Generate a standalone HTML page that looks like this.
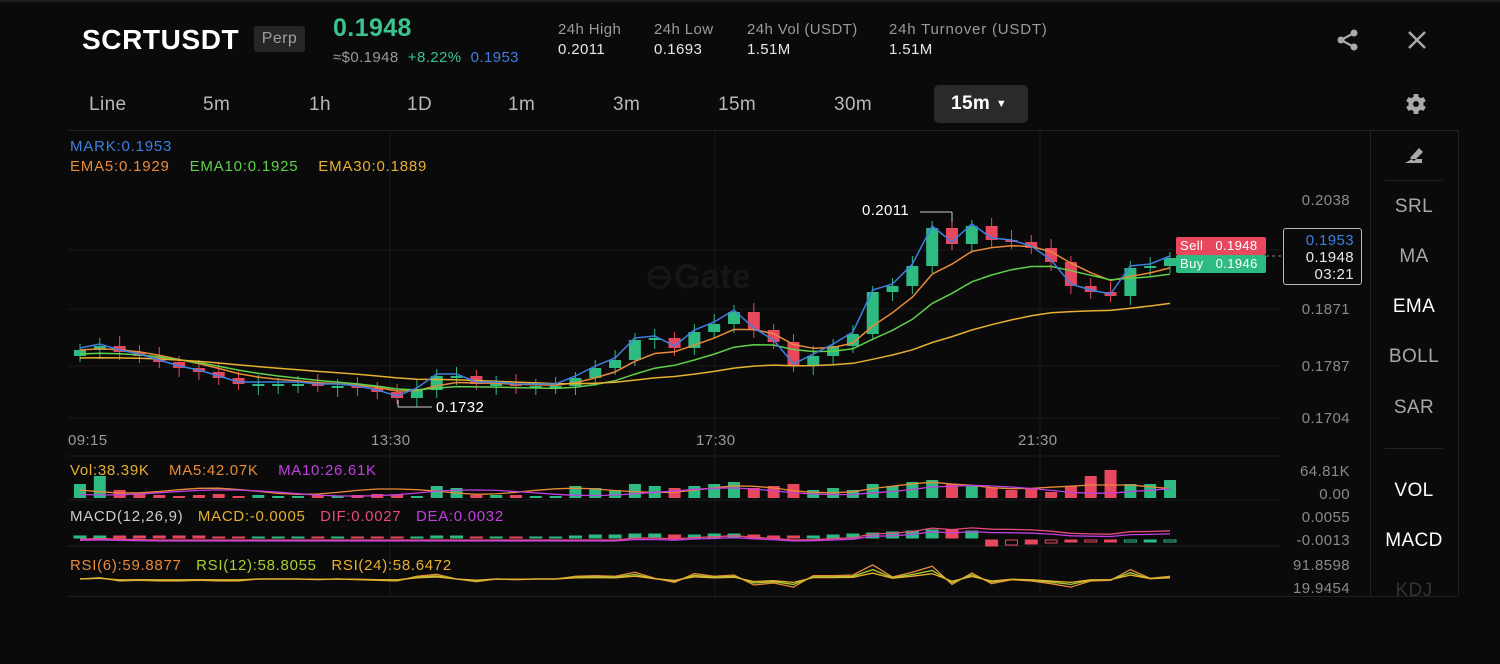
<!DOCTYPE html>
<html><head><meta charset="utf-8"><style>
*{margin:0;padding:0;box-sizing:border-box}
body{width:1500px;height:664px;background:#0a0a0b;font-family:"Liberation Sans",sans-serif;color:#e8e8e8;position:relative;overflow:hidden;letter-spacing:0.4px}
.a{position:absolute;white-space:nowrap}
.g{color:#9a9a9a}
.tf{position:absolute;top:94px;font-size:19px;color:#b8b8b8}
.ax{position:absolute;font-size:15px;color:#8a8a8a;right:150px}
.side{position:absolute;left:1385px;width:58px;text-align:center;font-size:19px;color:#a8a8a8}
</style></head><body>
<div class="a" style="left:0;top:0;width:1500px;height:2px;background:#1c1c1c"></div>
<div class="a" style="left:82px;top:24px;font-size:28px;font-weight:bold;color:#fff;letter-spacing:0.6px">SCRTUSDT</div>
<div class="a" style="left:254px;top:26px;width:51px;height:26px;background:#262628;border-radius:3px;color:#a0a0a0;font-size:16px;text-align:center;line-height:26px">Perp</div>
<div class="a" style="left:333px;top:14px;font-size:25px;font-weight:bold;color:#3bc48d">0.1948</div>
<div class="a" style="left:333px;top:49px;font-size:15px"><span class="g">≈$0.1948</span> <span style="color:#3bc48d">&nbsp;+8.22%</span> <span style="color:#3d7fe0">&nbsp;0.1953</span></div>
<div class="a g" style="left:558px;top:21px;font-size:15px">24h High</div><div class="a" style="left:558px;top:41px;font-size:15px">0.2011</div>
<div class="a g" style="left:654px;top:21px;font-size:15px">24h Low</div><div class="a" style="left:654px;top:41px;font-size:15px">0.1693</div>
<div class="a g" style="left:747px;top:21px;font-size:15px">24h Vol (USDT)</div><div class="a" style="left:747px;top:41px;font-size:15px">1.51M</div>
<div class="a g" style="left:889px;top:21px;font-size:15px;letter-spacing:0.8px">24h Turnover (USDT)</div><div class="a" style="left:889px;top:41px;font-size:15px">1.51M</div>
<svg class="a" style="left:1335px;top:28px" width="26" height="24" viewBox="0 0 26 24"><circle cx="19" cy="5" r="3.5" fill="#aaa"/><circle cx="19" cy="19" r="3.5" fill="#aaa"/><circle cx="6" cy="12" r="3.5" fill="#aaa"/><path d="M19 5L6 12L19 19" stroke="#aaa" stroke-width="2.2" fill="none"/></svg>
<svg class="a" style="left:1407px;top:30px" width="20" height="20"><path d="M2 2L18 18M18 2L2 18" stroke="#aaa" stroke-width="2.4"/></svg>
<div class="tf" style="left:89px">Line</div><div class="tf" style="left:203px">5m</div><div class="tf" style="left:309px">1h</div><div class="tf" style="left:407px">1D</div><div class="tf" style="left:508px">1m</div><div class="tf" style="left:613px">3m</div><div class="tf" style="left:718px">15m</div><div class="tf" style="left:834px">30m</div>
<div class="a" style="left:934px;top:85px;width:94px;height:38px;background:#2a2a2c;border-radius:5px;color:#fff;font-size:19px;line-height:38px;padding-left:17px;font-weight:bold">15m <span style="font-size:11px;vertical-align:2px">▼</span></div>
<svg class="a" style="left:1405px;top:93px" width="22" height="22" viewBox="0 0 22 22"><g fill="#aaa"><circle cx="11" cy="11" r="7.5"/><g id="t"><rect x="8.5" y="1" width="5" height="20" rx="1"/></g><use href="#t" transform="rotate(60 11 11)"/><use href="#t" transform="rotate(120 11 11)"/></g><circle cx="11" cy="11" r="3" fill="#0a0a0b"/></svg>
<div class="a" style="left:68px;top:130px;width:1390px;height:1px;background:#202022"></div>
<div class="a" style="left:1370px;top:130px;width:1px;height:466px;background:#202022"></div>
<div class="a" style="left:1458px;top:130px;width:1px;height:466px;background:#202022"></div>
<div class="a" style="left:68px;top:596px;width:1390px;height:1px;background:#202022"></div>
<div class="a" style="left:1385px;top:180px;width:58px;height:1px;background:#222"></div>
<div class="a" style="left:1385px;top:448px;width:58px;height:1px;background:#222"></div>
<svg class="a" style="left:1403px;top:145px" width="22" height="20"><path d="M2 18h17v-4H9z M7 13l9-10 4 4-9 9z" fill="#aaa"/></svg>
<div class="side" style="top:196px">SRL</div><div class="side" style="top:246px">MA</div><div class="side" style="top:296px;color:#fff">EMA</div><div class="side" style="top:346px">BOLL</div><div class="side" style="top:397px">SAR</div><div class="side" style="top:480px;color:#fff">VOL</div><div class="side" style="top:530px;color:#fff">MACD</div><div class="side" style="top:580px;color:#333">KDJ</div>
<svg id="ch" class="a" style="left:0;top:0" width="1370" height="600"></svg>
<div class="a" style="left:645px;top:257px;font-size:34px;font-weight:bold;color:#161617">⊖Gate</div>
<div class="a" style="left:70px;top:138px;font-size:15px;color:#3d7fe0;letter-spacing:0.8px">MARK:0.1953</div>
<div class="a" style="left:70px;top:158px;font-size:15px;letter-spacing:0.8px"><span style="color:#e88a3a">EMA5:0.1929</span>&nbsp;&nbsp;&nbsp;&nbsp;<span style="color:#5fd04a">EMA10:0.1925</span>&nbsp;&nbsp;&nbsp;&nbsp;<span style="color:#e8b030">EMA30:0.1889</span></div>
<div class="ax" style="top:192px">0.2038</div><div class="ax" style="top:301px">0.1871</div><div class="ax" style="top:358px">0.1787</div><div class="ax" style="top:410px">0.1704</div>
<div class="ax" style="top:463px">64.81K</div><div class="ax" style="top:486px">0.00</div><div class="ax" style="top:509px">0.0055</div><div class="ax" style="top:532px">-0.0013</div><div class="ax" style="top:557px">91.8598</div><div class="ax" style="top:580px">19.9454</div>
<div class="a" style="left:68px;top:432px;font-size:15px;color:#999">09:15</div><div class="a" style="left:371px;top:432px;font-size:15px;color:#999">13:30</div><div class="a" style="left:696px;top:432px;font-size:15px;color:#999">17:30</div><div class="a" style="left:1018px;top:432px;font-size:15px;color:#999">21:30</div>
<div class="a" style="left:862px;top:202px;font-size:15px;color:#fff">0.2011</div>
<div class="a" style="left:436px;top:399px;font-size:15px;color:#fff">0.1732</div>
<div class="a" style="left:1176px;top:237px;width:90px;height:18px;background:#e8485e;border-radius:2px;font-size:13px;color:#fff;line-height:18px;padding-left:4px">Sell&nbsp;&nbsp;&nbsp;0.1948</div>
<div class="a" style="left:1176px;top:255px;width:90px;height:18px;background:#2dbb82;border-radius:2px;font-size:13px;color:#fff;line-height:18px;padding-left:4px">Buy&nbsp;&nbsp;&nbsp;0.1946</div>
<div class="a" style="left:1283px;top:228px;width:79px;height:57px;border:1px solid #bbb;border-radius:3px;font-size:15px;text-align:right;padding-right:7px;line-height:17px;padding-top:3px"><span style="color:#3d7fe0">0.1953</span><br>0.1948<br>03:21</div>
<div class="a" style="left:70px;top:462px;font-size:15px;letter-spacing:0.7px"><span style="color:#e8b030">Vol:38.39K</span>&nbsp;&nbsp;&nbsp;&nbsp;<span style="color:#e88a3a">MA5:42.07K</span>&nbsp;&nbsp;&nbsp;&nbsp;<span style="color:#c040e0">MA10:26.61K</span></div>
<div class="a" style="left:70px;top:508px;font-size:15px;letter-spacing:0.7px"><span style="color:#ccc">MACD(12,26,9)</span>&nbsp;&nbsp;&nbsp;<span style="color:#e8b030">MACD:-0.0005</span>&nbsp;&nbsp;&nbsp;<span style="color:#e84a7a">DIF:0.0027</span>&nbsp;&nbsp;&nbsp;<span style="color:#c040e0">DEA:0.0032</span></div>
<div class="a" style="left:70px;top:557px;font-size:15px;letter-spacing:0.7px"><span style="color:#e88a3a">RSI(6):59.8877</span>&nbsp;&nbsp;&nbsp;<span style="color:#a8d030">RSI(12):58.8055</span>&nbsp;&nbsp;&nbsp;<span style="color:#e8b030">RSI(24):58.6472</span></div>
<script>
var s=document.getElementById('ch'),h='';
function L(x1,y1,x2,y2,c,w){h+='<line x1="'+x1+'" y1="'+y1+'" x2="'+x2+'" y2="'+y2+'" stroke="'+c+'" stroke-width="'+(w||1)+'"/>';}
[250,309,366,418].forEach(function(y){L(68,y,1280,y,'#1a1a1c')});
L(68,456,1280,456,'#1e1e20');L(68,500,1280,500,'#1a1a1c');L(68,546,1280,546,'#1e1e20');
[390,715,1040].forEach(function(x){L(x,130,x,596,'#1a1a1c')});
var c=[350,346,352,356,362,368,372,378,384,384,384,384,386,386,388,392,398,390,376,376,384,384,386,386,386,378,368,360,340,338,348,332,324,312,330,342,366,356,346,334,292,286,266,228,244,226,240,242,248,262,286,292,296,268,266,258];
var n=c.length,xs=[];for(var i=0;i<n;i++)xs.push(80+i*(1170-80)/(n-1));
var vb='';for(i=0;i<n;i++){var o=i?c[i-1]:c[0]+6,cl=c[i],up=cl<=o,col=up?'#2dbb82':'#e8485e',t=Math.min(o,cl),b=Math.max(o,cl);if(b-t<2)b=t+2;
L(xs[i],t-6-(i*7%5),xs[i],b+6+(i*3%4),col);h+='<rect x="'+(xs[i]-6)+'" y="'+t+'" width="12" height="'+(b-t)+'" fill="'+col+'"/>';
var vh=[14,22,8,4,3,2,3,4,2,3,2,2,3,2,3,4,3,2,12,10,3,3,3,2,2,12,10,8,14,12,10,12,14,16,10,12,14,8,10,8,14,12,16,18,14,12,10,8,10,6,12,22,28,14,14,18][i];
vb+='<rect x="'+(xs[i]-6)+'" y="'+(498-vh)+'" width="12" height="'+vh+'" fill="'+col+'"/>';
var mh=[2,2,2,2,2,2,2,1,1,1,1,1,1,1,1,1,1,1,2,2,1,1,1,1,1,2,3,3,4,4,3,3,4,4,3,2,2,2,3,4,5,6,7,8,8,7,6,5,4,3,2,2,2,2,2,2][i];
vb+='<rect x="'+(xs[i]-6)+'" y="'+(i>45?540:538-mh)+'" width="12" height="'+(mh)+'" fill="'+(i>45&&i%2?'none':col)+'" stroke="'+col+'" stroke-width="1"/>';}
h+=vb;
function ema(k,off){var e=c[0]+off,p=[];for(var i=0;i<n;i++){e=e+(c[i]+off-e)*2/(k+1);p.push(xs[i].toFixed(1)+','+e.toFixed(1));}return p.join(' ');}
function pl(p,col,w){h+='<polyline points="'+p+'" fill="none" stroke="'+col+'" stroke-width="'+(w||1.5)+'"/>';}
pl(ema(5,0),'#e88a3a');pl(ema(10,4),'#5fd04a');pl(ema(30,8),'#e8b030');
pl(c.map(function(v,i){return xs[i].toFixed(1)+','+(v-2)}).join(' '),'#3d7fe0');
function wave(base,amp,f,col,ph){var p=[];for(var i=0;i<n;i++){var y=base-(c[0]-c[i])*amp+Math.sin(i*f+ph)*3;p.push(xs[i].toFixed(1)+','+y.toFixed(1));}pl(p.join(' '),col,1.3);}
wave(490,0.04,0.7,'#e88a3a',0);wave(492,0.03,0.5,'#c040e0',1);
var d1=[],d2=[];for(i=0;i<n;i++){var v=Math.max(0,(360-c[i]))/10;d1.push(xs[i].toFixed(1)+','+(540-v*0.9).toFixed(1));d2.push(xs[i].toFixed(1)+','+(541-v*0.7).toFixed(1));}
pl(d1.join(' '),'#e84a7a',1.3);pl(d2.join(' '),'#c040e0',1.3);
var r=[[],[],[]];for(i=0;i<n;i++){var dd=i?c[i-1]-c[i]:0;[1.2,0.8,0.5].forEach(function(k,j){r[j].push(xs[i].toFixed(1)+','+(579-dd*k*0.28).toFixed(1));});}
pl(r[0].join(' '),'#e88a3a',1.3);pl(r[1].join(' '),'#a8d030',1.3);pl(r[2].join(' '),'#e8b030',1.3);
L(920,212,952,212,'#ccc');L(952,212,952,222,'#ccc');L(398,407,432,407,'#ccc');L(398,400,398,407,'#ccc');
h+='<line x1="1176" y1="256" x2="1283" y2="256" stroke="#888" stroke-dasharray="3,3"/>';
s.innerHTML=h;
</script>
</body></html>
